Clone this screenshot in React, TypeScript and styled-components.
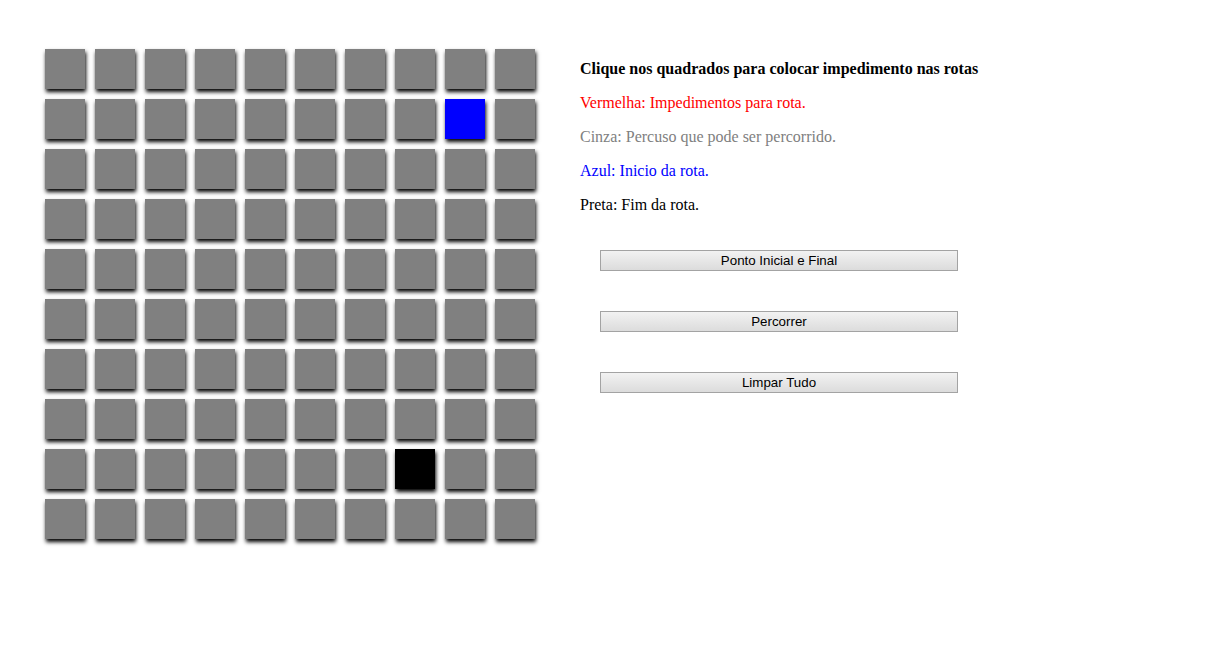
import React from "react";
import styled, { createGlobalStyle } from "styled-components";

const Global = createGlobalStyle`
  html, body { margin: 0; padding: 0; background: #fff; }
  body { font-family: "Liberation Serif", "Times New Roman", serif; font-size: 16px; }
`;

const Page = styled.div`
  display: flex;
  align-items: flex-start;
  box-sizing: border-box;
  min-height: 100vh;
  padding: 49px 0 40px 45px;
  gap: 45px;
`;

const Board = styled.div`
  display: grid;
  grid-template-columns: repeat(10, 40px);
  grid-auto-rows: 40px;
  gap: 10px;
  padding-bottom: 10px;
`;

const Cell = styled.div<{ $kind: "free" | "start" | "end" }>`
  width: 40px;
  height: 40px;
  background: ${(p) => (p.$kind === "start" ? "#0000ff" : p.$kind === "end" ? "#000000" : "#808080")};
  box-shadow: 1px 3px 4px #000;
  cursor: pointer;
`;

const Panel = styled.div`
  display: flex;
  flex-direction: column;
  padding-top: 11px;
`;

const Title = styled.p`
  margin: 0;
  line-height: 18px;
  font-weight: bold;
  color: #000;
`;

const Legend = styled.p<{ $color: string }>`
  margin: 16px 0 0;
  line-height: 18px;
  color: ${(p) => p.$color};
`;

const Actions = styled.div`
  display: flex;
  flex-direction: column;
  gap: 40px;
  margin: 36px 0 0 20px;
`;

const ActionButton = styled.button`
  width: 358px;
  height: 21px;
  padding: 0;
  border: 1px solid #a3a3a3;
  background: linear-gradient(#f2f2f2, #dcdcdc);
  font-family: "Liberation Sans", Arial, sans-serif;
  font-size: 13.33px;
  color: #000;
  cursor: pointer;
`;

const START = [1, 8];
const END = [8, 7];

export default function App() {
  const cells = [];
  for (let r = 0; r < 10; r++) {
    for (let c = 0; c < 10; c++) {
      const kind =
        r === START[0] && c === START[1] ? "start" : r === END[0] && c === END[1] ? "end" : "free";
      cells.push(<Cell key={`${r}-${c}`} $kind={kind} />);
    }
  }
  return (
    <>
      <Global />
      <Page>
        <Board>{cells}</Board>
        <Panel>
          <Title>Clique nos quadrados para colocar impedimento nas rotas</Title>
          <Legend $color="#ff0000">Vermelha: Impedimentos para rota.</Legend>
          <Legend $color="#808080">Cinza: Percuso que pode ser percorrido.</Legend>
          <Legend $color="#0000ff">Azul: Inicio da rota.</Legend>
          <Legend $color="#000000">Preta: Fim da rota.</Legend>
          <Actions>
            <ActionButton>Ponto Inicial e Final</ActionButton>
            <ActionButton>Percorrer</ActionButton>
            <ActionButton>Limpar Tudo</ActionButton>
          </Actions>
        </Panel>
      </Page>
    </>
  );
}
